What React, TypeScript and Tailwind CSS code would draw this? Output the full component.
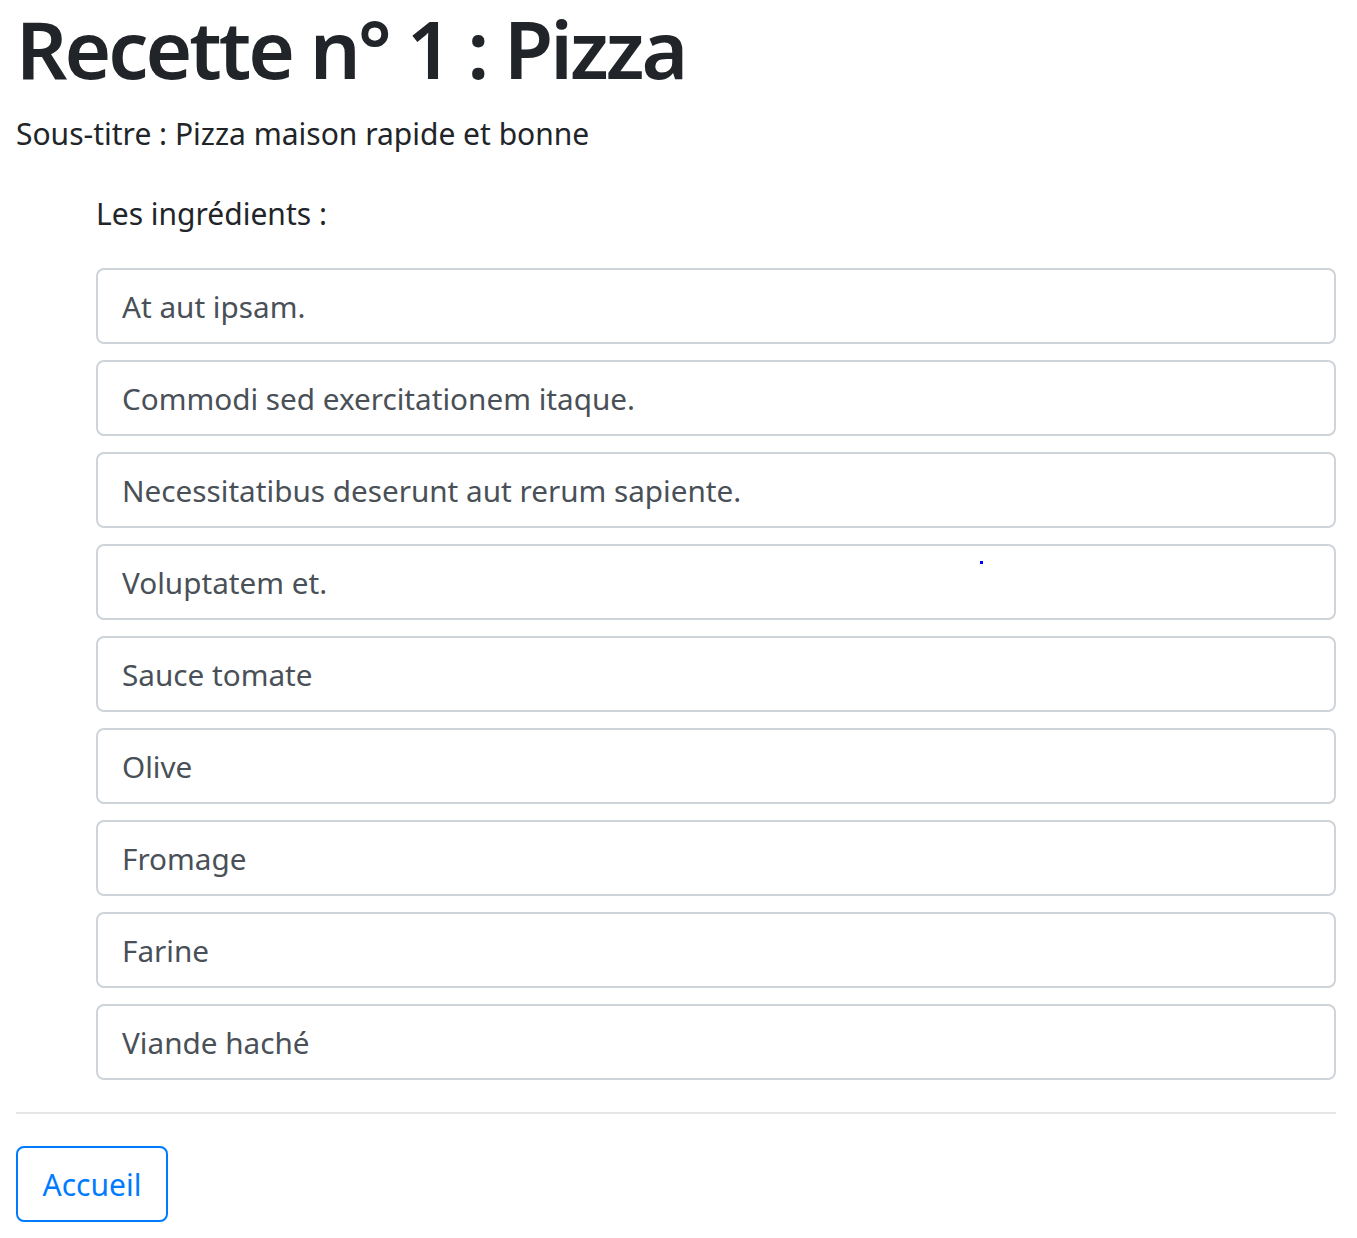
import React from 'react';

const ingredients = [
  'At aut ipsam.',
  'Commodi sed exercitationem itaque.',
  'Necessitatibus deserunt aut rerum sapiente.',
  'Voluptatem et.',
  'Sauce tomate',
  'Olive',
  'Fromage',
  'Farine',
  'Viande haché',
];

const App: React.FC = () => {
  return (
    <div className="relative min-h-screen bg-white font-['Noto_Sans',sans-serif] text-[#212529]">
      <div className="ml-4 w-[1320px]">
        <h1 className="text-[80px] leading-[96px] font-semibold tracking-[-3px]">Recette n° 1 : Pizza</h1>
        <p className="mt-[16px] text-[30px] leading-[44px]">Sous-titre : Pizza maison rapide et bonne</p>

        <ul className="mt-[36px] pl-[80px]">
          <li className="mb-[32px] text-[30px] leading-[44px]">Les ingrédients :</li>
          {ingredients.map((item) => (
            <li key={item} className="mb-4">
              <input
                readOnly
                value={item}
                className="block h-[76px] w-full rounded-lg border-2 border-[#ced4da] bg-white px-6 text-[29.7px] text-[#495057] outline-none"
              />
            </li>
          ))}
        </ul>

        <hr className="mt-[32px] border-t-2 border-[#e6e6e6]" />

        <button className="mt-[32px] h-[76px] w-[152px] rounded-lg border-2 border-[#007bff] text-[30px] text-[#007bff]">
          Accueil
        </button>
      </div>

      {/* stray cursor dot */}
      <span className="absolute left-[980px] top-[561px] h-[3px] w-[3px] bg-[#0000ff]" />
    </div>
  );
};

export default App;
